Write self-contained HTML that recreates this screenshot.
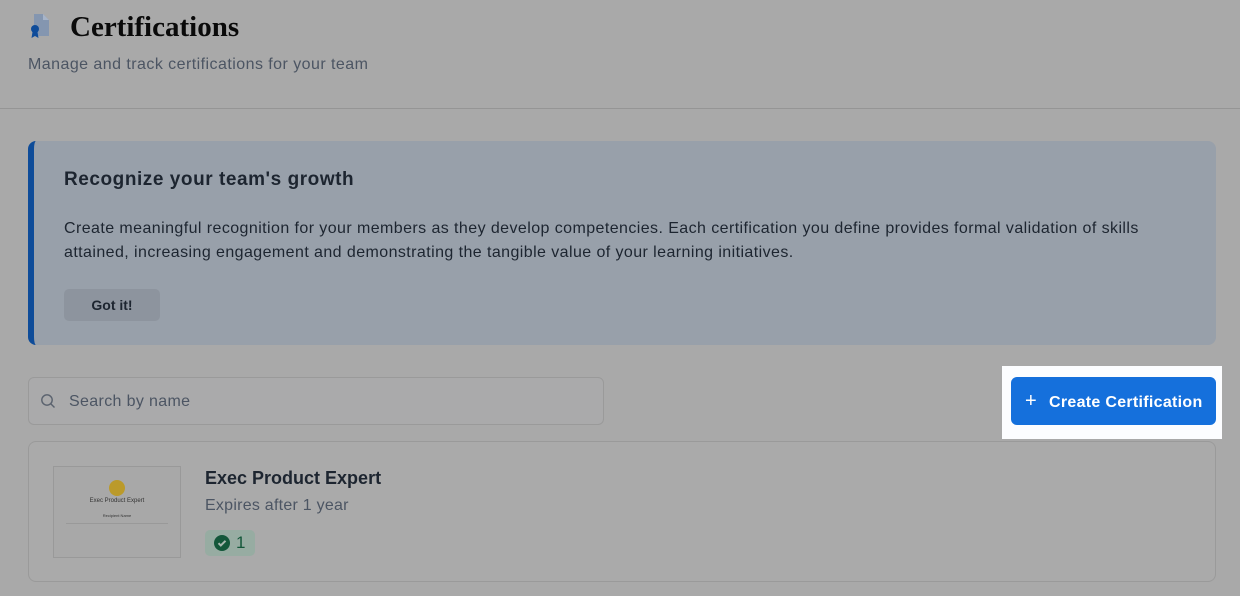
<!DOCTYPE html>
<html><head><meta charset="utf-8"><style>
*{box-sizing:border-box;margin:0;padding:0}
body{width:1240px;height:596px;overflow:hidden;background:#a9a9a9;font-family:"Liberation Sans",sans-serif;position:relative}
.abs{position:absolute}
</style></head><body>
<svg class="abs" style="left:28px;top:12px" width="26" height="28" viewBox="0 0 26 28">
<path d="M6 2h9l6 6v16H6z" fill="#8496b0"/><path d="M15 2v6h6" fill="#a7b4c8"/>
<circle cx="7" cy="17" r="4" fill="#0f4c9a"/><path d="M4.5 20l-1 6 3.5-2 3.5 2-1-6z" fill="#0f4c9a"/>
</svg>
<div class="abs" style="left:70px;top:11px;font-family:'Liberation Serif',serif;font-weight:bold;font-size:29px;color:#0a0a0a">Certifications</div>
<div class="abs" style="left:28px;top:56px;font-size:16px;letter-spacing:0.45px;color:#4c5563">Manage and track certifications for your team</div>
<div class="abs" style="left:0;top:108px;width:1240px;height:1px;background:#959595"></div>

<div class="abs" style="left:28px;top:141px;width:1188px;height:204px;background:#98a0aa;border-radius:8px;border-left:6px solid #0e4c99"></div>
<div class="abs" style="left:64px;top:169px;font-size:19px;letter-spacing:0.55px;font-weight:bold;color:#1d2530">Recognize your team's growth</div>
<div class="abs" style="left:64px;top:217px;width:1130px;font-size:16px;letter-spacing:0.42px;line-height:24px;color:#1d2530">Create meaningful recognition for your members as they develop competencies. Each certification you define provides formal validation of skills attained, increasing engagement and demonstrating the tangible value of your learning initiatives.</div>
<div class="abs" style="left:64px;top:289px;width:96px;height:32px;background:#8d949e;border-radius:5px;font-size:14px;font-weight:bold;color:#1d2530;text-align:center;line-height:32px">Got it!</div>

<div class="abs" style="left:28px;top:377px;width:576px;height:48px;border:1px solid #9a9a9a;border-radius:6px;background:#aaaaab"></div>
<svg class="abs" style="left:40px;top:393px" width="16" height="16" viewBox="0 0 16 16"><circle cx="7" cy="7" r="5.2" fill="none" stroke="#5a626e" stroke-width="1.4"/><path d="M11 11l3.5 3.5" stroke="#5a626e" stroke-width="1.4"/></svg>
<div class="abs" style="left:69px;top:393px;font-size:16px;letter-spacing:0.35px;color:#4c5563">Search by name</div>

<div class="abs" style="left:1002px;top:366px;width:220px;height:73px;background:#fcfdff"></div>
<div class="abs" style="left:1011px;top:377px;width:205px;height:48px;background:#1570dc;border-radius:6px;color:#fff;font-size:16px;font-weight:bold;letter-spacing:0.3px;line-height:48px;padding-left:14px"><span style="font-weight:normal;font-size:20px;margin-right:12px">+</span>Create Certification</div>

<div class="abs" style="left:28px;top:441px;width:1188px;height:141px;border:1px solid #9a9a9a;border-radius:8px;background:#aaaaaa"></div>
<div class="abs" style="left:53px;top:466px;width:128px;height:92px;border:1px solid #999;background:#a8a8a8"></div>
<div class="abs" style="left:109px;top:480px;width:16px;height:16px;border-radius:50%;background:#bb9a2a"></div>
<div class="abs" style="left:53px;top:498px;width:128px;text-align:center;font-size:6px;color:#333">Exec Product Expert</div>
<div class="abs" style="left:53px;top:513px;width:128px;text-align:center;font-size:4px;color:#333">Recipient Name</div>
<div class="abs" style="left:66px;top:523px;width:102px;height:1px;background:#999"></div>
<div class="abs" style="left:205px;top:468px;font-size:18px;font-weight:bold;color:#1d2530">Exec Product Expert</div>
<div class="abs" style="left:205px;top:497px;font-size:16px;letter-spacing:0.25px;color:#4c5563">Expires after 1 year</div>
<div class="abs" style="left:205px;top:530px;width:50px;height:26px;background:#97aca2;border-radius:5px"></div>
<svg class="abs" style="left:214px;top:535px" width="16" height="16" viewBox="0 0 16 16"><circle cx="8" cy="8" r="8" fill="#14573a"/><path d="M4.5 8.2l2.3 2.3 4.7-4.7" fill="none" stroke="#a9b8b0" stroke-width="2"/></svg>
<div class="abs" style="left:236px;top:533px;font-size:17px;color:#14573a">1</div>
</body></html>
